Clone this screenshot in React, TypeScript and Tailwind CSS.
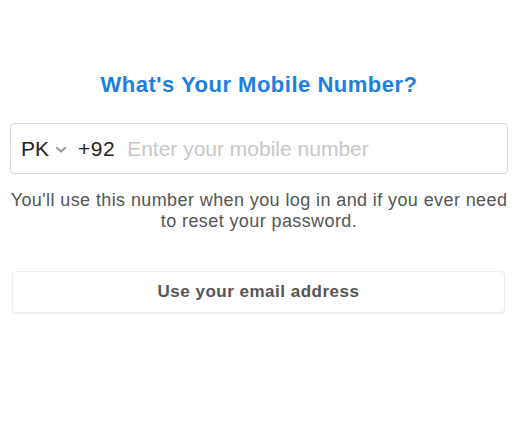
import React from "react";

export default function App() {
  return (
    <div className="w-[518px] h-[436px] bg-white pt-[71px] px-[10px] font-['Liberation_Sans',Arial,sans-serif]">
      <h1 className="text-center text-[22px] leading-[28px] font-bold tracking-[0.5px] text-[#1b7fe0]">
        What's Your Mobile Number?
      </h1>

      <div className="mt-[24px] h-[51px] flex items-center border border-[#d9d9d9] rounded-[4px] pl-[10px] pr-3">
        <div className="flex items-center text-[21px] text-[#222]">
          <span>PK</span>
          <svg width="12" height="8" viewBox="0 0 12 8" className="ml-[6px] mt-[2px]">
            <path d="M2 2 L6 5.5 L10 2" fill="none" stroke="#9a9a9a" strokeWidth="2.2" strokeLinecap="round" strokeLinejoin="round" />
          </svg>
        </div>
        <span className="ml-[11px] text-[21px] tracking-[0.5px] text-[#222]">+92</span>
        <input
          className="ml-[12px] flex-1 min-w-0 text-[21px] text-[#222] placeholder:text-[#c8c8c8] outline-none bg-transparent"
          placeholder="Enter your mobile number"
        />
      </div>

      <p className="mt-[16px] text-center text-[18px] leading-[21px] tracking-[0.4px] text-[#555]">
        You'll use this number when you log in and if you ever need to reset your password.
      </p>

      <button className="mt-[39px] mx-[2px] w-[493px] h-[42px] rounded-[4px] border border-[#ececec] shadow-[0_1px_2px_rgba(0,0,0,0.06)] bg-white text-[17px] font-bold tracking-[0.5px] text-[#555]">
        Use your email address
      </button>
    </div>
  );
}
